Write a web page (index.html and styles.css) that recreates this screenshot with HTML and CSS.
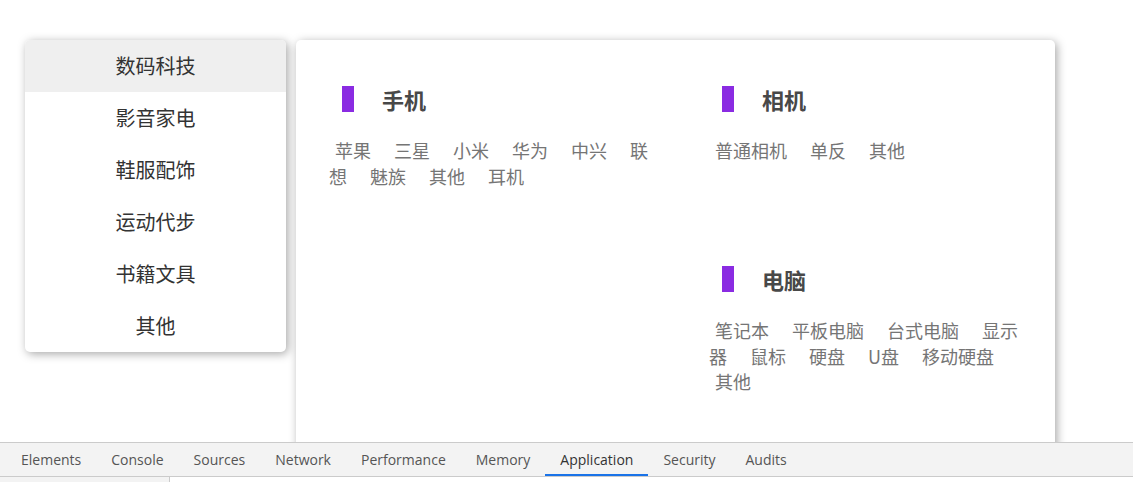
FILE: index.html
```html
<!DOCTYPE html>
<html lang="zh">
<head>
<meta charset="utf-8">
<title>分类</title>
<link rel="stylesheet" href="styles.css">
</head>
<body>
<div class="stage">
  <ul class="menu">
    <li class="menu-item active">数码科技</li>
    <li class="menu-item">影音家电</li>
    <li class="menu-item">鞋服配饰</li>
    <li class="menu-item">运动代步</li>
    <li class="menu-item">书籍文具</li>
    <li class="menu-item">其他</li>
  </ul>
  <div class="panel">
    <div class="col">
      <div class="section">
        <h3 class="heading"><span class="bar"></span>手机</h3>
        <p class="items"><span class="item">苹果</span><span class="item">三星</span><span class="item">小米</span><span class="item">华为</span><span class="item">中兴</span><span class="item">联想</span><span class="item">魅族</span><span class="item">其他</span><span class="item">耳机</span></p>
      </div>
    </div>
    <div class="col">
      <div class="section">
        <h3 class="heading"><span class="bar"></span>相机</h3>
        <p class="items"><span class="item">普通相机</span><span class="item">单反</span><span class="item">其他</span></p>
      </div>
      <div class="section">
        <h3 class="heading"><span class="bar"></span>电脑</h3>
        <p class="items"><span class="item">笔记本</span><span class="item">平板电脑</span><span class="item">台式电脑</span><span class="item">显示器</span><span class="item">鼠标</span><span class="item">硬盘</span><span class="item">U盘</span><span class="item">移动硬盘</span><span class="item">其他</span></p>
      </div>
    </div>
  </div>
</div>
<div class="devtools">
  <div class="tabs">
    <span class="tab">Elements</span>
    <span class="tab">Console</span>
    <span class="tab">Sources</span>
    <span class="tab">Network</span>
    <span class="tab">Performance</span>
    <span class="tab">Memory</span>
    <span class="tab active">Application</span>
    <span class="tab">Security</span>
    <span class="tab">Audits</span>
  </div>
  <div class="drawer">
    <div class="drawer-side"></div>
    <div class="drawer-main"></div>
  </div>
</div>
</body>
</html>
```
FILE: styles.css
```css
* { box-sizing: border-box; }
html, body { margin: 0; padding: 0; }
body {
  height: 100vh;
  display: flex;
  flex-direction: column;
  overflow: hidden;
  background: #fff;
  font-family: "Noto Sans CJK SC", "Noto Sans", sans-serif;
}
.stage {
  flex: 1;
  min-height: 0;
  overflow: hidden;
  display: flex;
  align-items: flex-start;
  gap: 10px;
  padding: 40px 0 0 25px;
}
.menu {
  list-style: none;
  margin: 0;
  padding: 0;
  width: 261px;
  background: #fff;
  border-radius: 5px;
  overflow: hidden;
  box-shadow: 2px 2px 10px rgba(0, 0, 0, 0.35);
}
.menu-item {
  height: 52px;
  line-height: 52px;
  text-align: center;
  font-size: 20px;
  color: #333;
}
.menu-item.active { background: #efefef; }
.panel {
  flex: none;
  width: 759px;
  height: 440px;
  background: #fff;
  border-radius: 5px;
  box-shadow: 2px 2px 10px rgba(0, 0, 0, 0.35);
  padding: 46px 0 0 33px;
  display: grid;
  grid-template-columns: 328px 320px;
  column-gap: 52px;
  align-items: start;
}
.col { display: flex; flex-direction: column; }
.section { height: 180px; }
.heading {
  margin: 0;
  padding-left: 13px;
  height: 26px;
  display: flex;
  align-items: center;
  font-size: 22px;
  font-weight: bold;
  line-height: 26px;
  color: #484848;
}
.bar {
  width: 12px;
  height: 26px;
  background: #8a2be2;
  margin-right: 28px;
}
.items {
  margin: 26px 0 0;
  font-size: 18px;
  line-height: 25.5px;
  color: #757575;
}
.item {
  padding: 0 6px;
  margin-right: 11px;
}
.devtools {
  flex: none;
  height: 40px;
  border-top: 1px solid #cbcbcb;
  background: #f3f3f3;
  display: flex;
  flex-direction: column;
  font-family: "Open Sans", "Noto Sans", sans-serif;
}
.tabs {
  height: 34px;
  display: flex;
  padding-left: 6px;
  border-bottom: 1px solid #cbcbcb;
}
.tab {
  padding: 0 15px;
  line-height: 33px;
  height: 33px;
  font-size: 14px;
  color: #555;
}
.tab.active {
  color: #333;
  box-shadow: inset 0 -2px 0 #1a73e8;
}
.drawer { flex: 1; display: flex; }
.drawer-side {
  width: 170px;
  background: #f3f3f3;
  border-right: 1px solid #cbcbcb;
}
.drawer-main { flex: 1; background: #fff; }
```
